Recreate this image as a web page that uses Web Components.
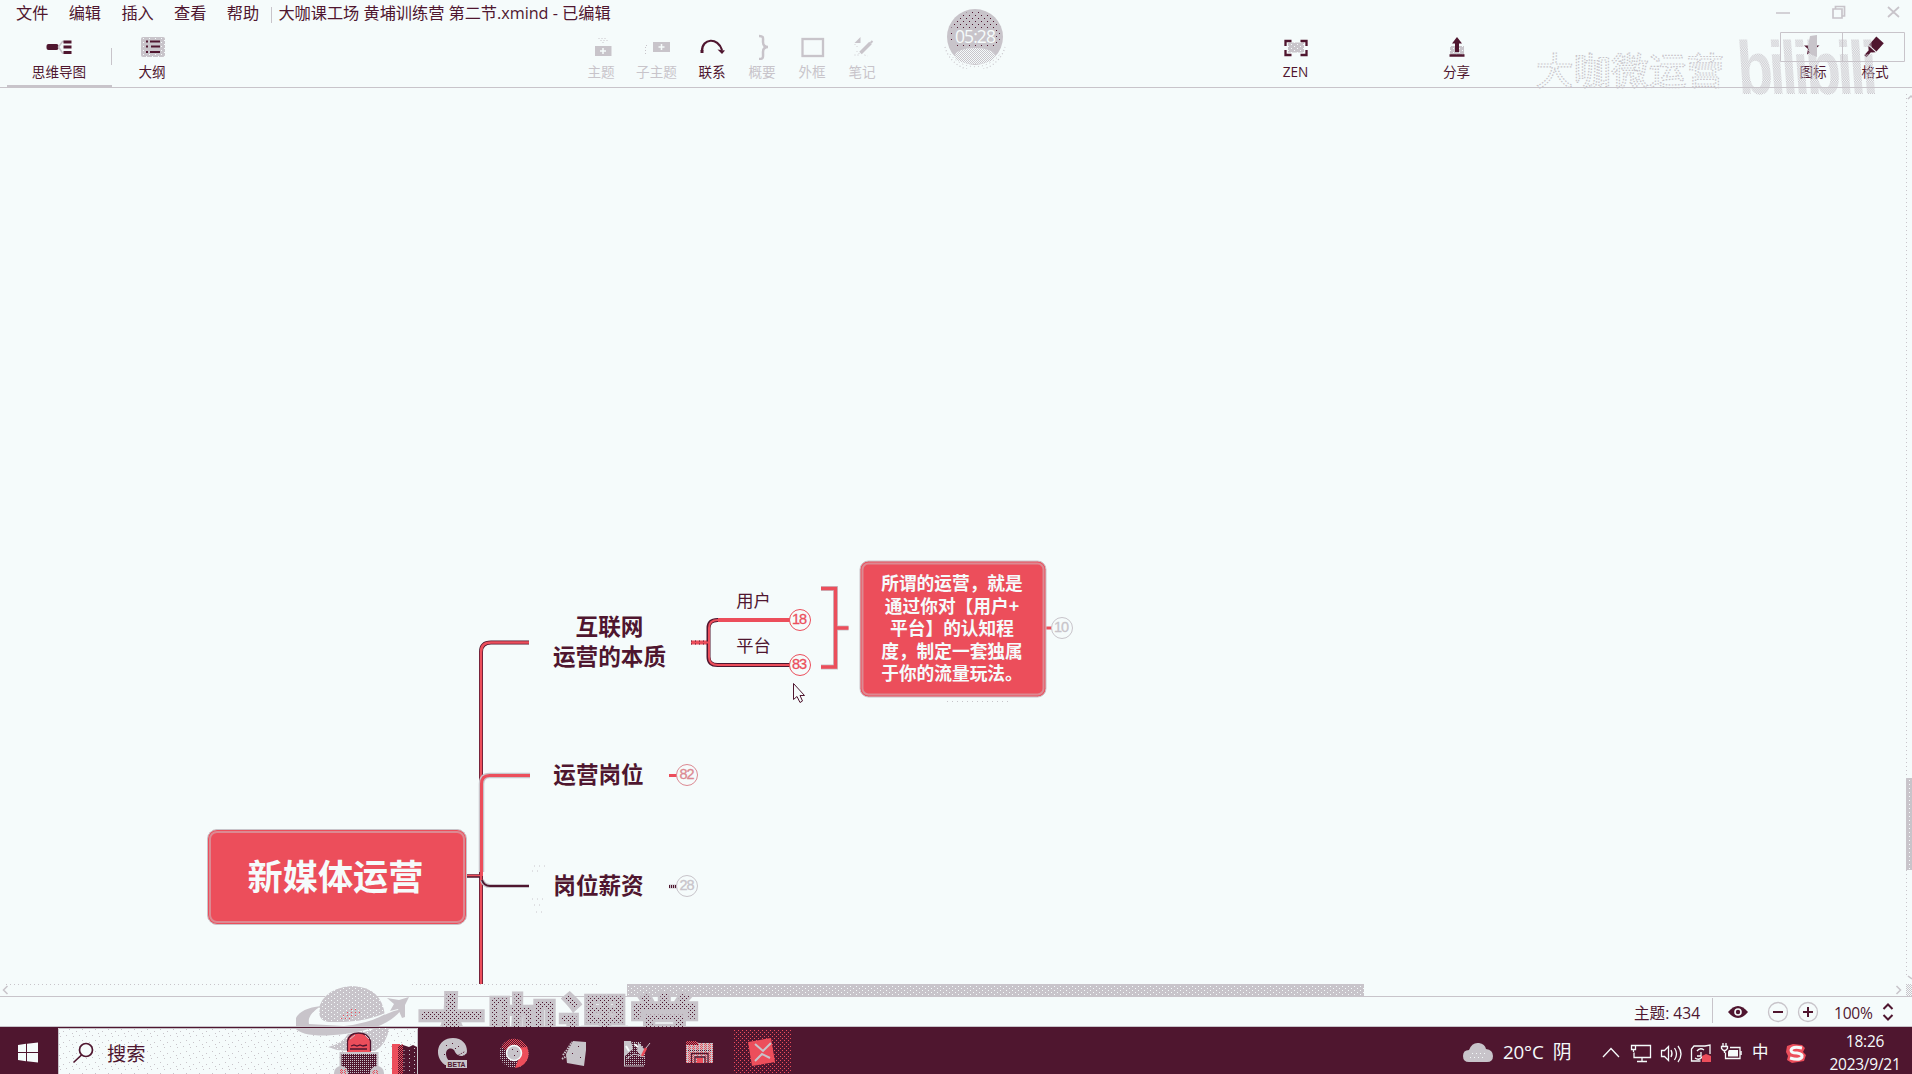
<!DOCTYPE html>
<html lang="zh-CN">
<head>
<meta charset="utf-8">
<title>XMind</title>
<style>
html,body{margin:0;height:100%;overflow:hidden}
body{--bg:#f5fbfb;--ink:#4f162f;--red:#ec4e5b;--gray:#c8c4ca;background:var(--bg);color:var(--ink);font-family:"Open Sans","Noto Sans CJK SC",sans-serif}
</style>
</head>
<body>
<mind-app></mind-app>
<script>
const DEFS = `<defs>
<pattern id="dk" width="4" height="4" patternUnits="userSpaceOnUse"><rect width="4" height="4" fill="#c8c4ca"/><rect width="1" height="1" fill="#4f162f"/><rect x="2" y="2" width="1" height="1" fill="#4f162f"/></pattern>
<pattern id="wh" width="6" height="4" patternUnits="userSpaceOnUse"><rect width="6" height="4" fill="#c8c4ca"/><rect x="1" width="1" height="1" fill="#f5fbfb"/><rect x="4" y="2" width="1" height="1" fill="#f5fbfb"/></pattern>
<pattern id="ck" width="2" height="2" patternUnits="userSpaceOnUse"><rect width="1" height="1" fill="#c8c4ca"/><rect x="1" y="1" width="1" height="1" fill="#c8c4ca"/></pattern>
<pattern id="rd" width="2" height="2" patternUnits="userSpaceOnUse"><rect width="2" height="2" fill="#4f162f"/><rect width="1" height="1" fill="#ec4e5b"/><rect x="1" y="1" width="1" height="1" fill="#ec4e5b"/></pattern>
<pattern id="rg" width="4" height="2" patternUnits="userSpaceOnUse"><rect width="4" height="2" fill="#c8c4ca"/><rect width="1" height="1" fill="#ec4e5b"/><rect x="2" width="1" height="1" fill="#ec4e5b"/><rect x="1" y="1" width="1" height="1" fill="#ec4e5b"/></pattern>
<pattern id="gk" width="2" height="2" patternUnits="userSpaceOnUse"><rect width="2" height="2" fill="#4f162f"/><rect width="1" height="1" fill="#c8c4ca"/></pattern>
</defs>`;
/* Icon art is written in window coordinates; the viewBox selects its cell. */
const art = (x,y,w,h,body) => `<svg width="${w}" height="${h}" viewBox="${x} ${y} ${w} ${h}" style="display:block;flex:none">${DEFS}${body}</svg>`;
const define = (name, css, html) => customElements.define(name, class extends HTMLElement{
  constructor(){ super(); this.attachShadow({mode:'open'}).innerHTML = `<style>${css}</style>` + html; }
});

define('tool-item', `:host{display:flex;flex-direction:column;align-items:center;padding-top:5px;box-sizing:border-box;height:59px;flex:none;width:var(--w,55px)}
:host([muted]){color:var(--gray)}
:host([active]){border-bottom:2px solid var(--gray)}
.l{font-size:13.6px;line-height:18px;margin-top:3px;white-space:nowrap;margin-left:-1px}
:host([shift]) .l{padding-left:5px}`, `<slot name="icon"></slot><div class="l"><slot></slot></div>`);

define('menu-bar', `:host{display:flex;height:28px;font-size:16.2px;line-height:26px;padding:0 0 0 16px;box-sizing:border-box;white-space:nowrap}
.m{width:52.7px;flex:none}.d{width:1px;height:16px;margin:7px 6px 0 -8px;background:var(--gray);flex:none}
.t{letter-spacing:-.02px}.w{margin-left:auto}`,
`<span class="m">文件</span><span class="m">编辑</span><span class="m">插入</span><span class="m">查看</span><span class="m">帮助</span><div class="d"></div><span class="t">大咖课工场 黄埔训练营 第二节.xmind - 已编辑</span>
<div class="w">${art(1770,0,142,28,`<g fill="none" stroke="#c8c4ca" stroke-width="1.7"><path d="M1776 13h14M1833 9h9v9h-9zM1835.500 9V6.500h9V16H1842M1888 7l11 10M1899 7l-11 10"/></g>`)}</div>`);

define('recording-timer', `:host{display:grid;place-items:center;width:64px;height:64px;position:relative}
svg{position:absolute;inset:0}span{position:relative;color:#f5fbfb;font:17.5px/20px "Open Sans",sans-serif;letter-spacing:-.9px;top:-1px}`,
`${art(943,5,64,64,`<circle cx="975" cy="37" r="28" fill="#c8c4ca"/><pattern id="d5" width="6" height="6" patternUnits="userSpaceOnUse"><rect width="1" height="1" fill="#4f162f"/><rect x="3" y="3" width="1" height="1" fill="#4f162f"/></pattern><path d="M951 43a25 25 0 1 1 48 0l-3 3h-42z" fill="url(#d5)"/><rect x="953" y="29" width="43" height="15" fill="#c8c4ca"/><ellipse cx="975" cy="56" rx="20" ry="8" fill="#f5fbfb"/><ellipse cx="975" cy="56" rx="20" ry="8" fill="url(#ck)"/><path d="M945 47a31 31 0 0 0 60 0" fill="none" stroke="#c8c4ca" stroke-width="1.200" stroke-dasharray="1 2.500"/><path d="M950 54a31 31 0 0 0 50 0" fill="none" stroke="#c8c4ca" stroke-dasharray="1 3"/>`)}<span>05:28</span>`);

const ti = (c,w,label,body,attr='') => `<tool-item style="--w:${w}px" ${attr}><div slot="icon">${art(c-16,33,32,27,body)}</div>${label}</tool-item>`;
define('tool-bar', `:host{display:flex;height:60px;border-bottom:1px solid var(--gray);box-sizing:border-box;padding-left:7px;position:relative}
.s{flex:none}.d{width:1px;height:17px;background:var(--gray);margin:20px 0 0 -1px;flex:none}
recording-timer{position:absolute;left:943px;top:-23px}.wm{position:absolute;left:1530px;top:-20px}`,
`${ti(59.5,105,'思维导图',`<rect x="46" y="44" width="12" height="6" rx="2" fill="#4f162f"/><path d="M64 41.500h-2l-4 5.500 4 6h2" fill="none" stroke="#c8c4ca" stroke-width="1.500"/><path d="M63 42h8M63 47h8M63 52.500h8" stroke="#4f162f" stroke-width="3"/>`,'active')}<div class="d"></div>
${ti(152,81,'大纲',`<rect x="140" y="37" width="24" height="20" rx="2" fill="url(#wh)"/><rect x="144" y="40" width="16" height="14" fill="#c8c4ca"/><path d="M145 41.500h2M149 41.500h10M145 46.500h2M150 46.500h9M145 52h2M149 52h10" stroke="#4f162f" stroke-width="2"/>`)}
<div class="s" style="width:381px"></div>
${ti(601.5,55,'主题',`<path d="M594.500 46h16.500v10H594.500z" fill="#c8c4ca"/><path d="M602.500 48v6M599.500 51h6" stroke="#f5fbfb" stroke-width="1.500"/><path d="M598 38.500h9M600 40.500h8M602 42.500h3" stroke="#c8c4ca" stroke-dasharray="1 2"/>`,'muted')}
${ti(657,56,'子主题',`<path d="M653 42h17v10H653z" fill="#c8c4ca"/><path d="M661.500 44v6M658.500 47h6" stroke="#f5fbfb" stroke-width="1.500"/><path d="M647 45.500h-1.500v10" fill="none" stroke="#c8c4ca" stroke-dasharray="1 2"/>`,'muted')}
${ti(712.5,55,'联系',`<path d="M701.500 51c0-13 16-14 20-1" fill="none" stroke="#4f162f" stroke-width="2.200"/><rect x="700" y="50" width="3" height="3" fill="#4f162f"/><path d="M717 49.500l7.500 1-3 3.500z" fill="#4f162f"/>`)}
${ti(762.5,45,'概要',`<path d="M758.500 36c5 0 4 2 4 6 0 3 1 5 5 5-4 0-5 2-5 5 0 5 1 7-4 7" fill="none" stroke="#c8c4ca" stroke-width="2.500"/>`,'muted')}
${ti(812.5,55,'外框',`<rect x="802" y="39" width="20.500" height="17" fill="none" stroke="#c8c4ca" stroke-width="2.300"/>`,'muted')}
${ti(862.5,45,'笔记',`<path d="M860 53l10-10" stroke="#c8c4ca" stroke-width="3.500"/><path d="M870 43l2-2" stroke="#c8c4ca" stroke-width="2"/><path d="M860 37v6h-6z" fill="#c8c4ca"/><path d="M854 44l4 4M854 55h4M856 51l3 3M864 55l3 1" stroke="#c8c4ca" stroke-dasharray="1 2"/>`,'muted')}
<div class="s" style="width:381px"></div>
${ti(1296,60,'ZEN',`<rect x="1288" y="42.500" width="16" height="10" fill="url(#wh)"/><path d="M1285.500 46v-5h6M1300.500 41h6v5M1285.500 50v5h6M1300.500 55h6v-5" fill="none" stroke="#4f162f" stroke-width="2.300"/>`)}
<div class="s" style="width:101px"></div>
${ti(1457,60,'分享',`<path d="M1450 46h14v9h-14z" fill="url(#wh)"/><path d="M1449.500 55.500h15" stroke="#4f162f" stroke-width="2.500"/><path d="M1457 52V41" stroke="#4f162f" stroke-width="4"/><path d="M1457 37l5 6.500h-10z" fill="#4f162f"/>`)}
<div class="s" style="width:293px"></div>
${ti(1811,62,'图标',`<path d="M1812 41l2 4.500h5.500l-4.500 3.500 2 5.500-5-3-5 3 1-5.500-4-3.500h6z" fill="#4f162f"/>`,'shift')}${ti(1873,62,'格式',`<g transform="rotate(42 1873 47)" fill="#4f162f"><path d="M1868.500 37h10v11h-10z"/><path d="M1868.500 49h10l-3 3h-4z"/><path d="M1872 51h3v8h-3z"/></g>`,'shift')}
<div class="wm">${art(1530,8,382,110,`<path d="M1780.500 32.500h124v29h-124zM1842.500 32.500v29" fill="none" stroke="#c8c4ca"/>
<text x="1536" y="85" font-size="37" textLength="188" lengthAdjust="spacingAndGlyphs" fill="none" stroke="#c8c4ca" stroke-width="1.200" stroke-dasharray="1.500 1.500" font-family="Noto Sans CJK SC,sans-serif">大咖微运营</text>
<text transform="translate(1739 94) skewX(4) scale(1 1.300)" x="0" y="0" font-size="58" font-weight="700" textLength="140" lengthAdjust="spacing" fill="url(#ck)" font-family="Liberation Sans,sans-serif">bilibili</text>
<path d="M1810 36l7-1v22l-7-3-2-7z" fill="#c8c4ca"/>`)}</div>
<recording-timer></recording-timer>`);

define('map-topic', `:host{position:absolute;left:var(--x);top:var(--y);transform:translate(-50%,-50%);text-align:center;white-space:nowrap;font:700 22.6px/30px "Noto Sans CJK SC",sans-serif}
:host([kind=leaf]){font-weight:400;font-size:17.3px;line-height:24px}
:host([kind=root]),:host([kind=note]){background:var(--red);color:var(--bg);box-sizing:border-box;display:grid;place-items:center;border:1.5px solid var(--gray);box-shadow:inset 0 0 0 1px var(--red),inset 0 0 0 3px #dc8992}
:host([kind=root]){width:260px;height:96px;border-radius:10px;font-size:35.2px}
:host([kind=root]) div{margin:-5px 0 0 -3px}
:host([kind=note]){width:187px;height:137px;border-radius:9px;font-size:17.7px;line-height:22.5px}
:host([kind=note]) div{margin:-3px 0 0 -2px}`, `<div><slot></slot></div>`);
define('fold-badge', `:host{position:absolute;left:var(--x);top:var(--y);width:22px;height:22px;border-radius:50%;box-sizing:border-box;border:1.8px solid var(--c,var(--red));color:var(--c,var(--red));background:var(--bg);transform:translate(-50%,-50%);font:14.5px/19px "Liberation Sans",sans-serif;text-align:center;letter-spacing:-1px;text-indent:-1px;-webkit-text-stroke:.3px}`, `<slot></slot>`);

define('map-canvas', `:host{display:block;position:relative;height:896px;overflow:hidden}
.lines{position:absolute;left:0;top:0}`,
`<div class="lines">${art(0,88,1912,896,`
<g fill="none"><path d="M481 984V652q0-9.500 10-9.500H529" stroke="#4f162f" stroke-width="4"/><path d="M481 984V652q0-9.500 10-9.500H529" stroke="#ec4e5b" stroke-width="2.500"/>
<path d="M481.500 872V784q0-8.500 8-8.500H530" stroke="#c8c4ca" stroke-width="5.500"/><path d="M481.500 876V784q0-8.500 8-8.500H530" stroke="#ec4e5b" stroke-width="3"/>
<path d="M482 880q2 6 8 6H529" stroke="#c8c4ca" stroke-width="4"/><path d="M482 880q2 6 8 6H529" stroke="#4f162f" stroke-width="2"/>
<path d="M467 876h13" stroke="#4f162f" stroke-width="3.500"/><path d="M467 875.500h13" stroke="#ec4e5b" stroke-width="1.500"/>
<path d="M691 642.500h17" stroke="#ec4e5b" stroke-width="4"/><path d="M691 642.500h17" stroke="#4f162f" stroke-width="4" stroke-dasharray="1 3"/><path d="M708.500 642V628q0-8 9-8H726M708.500 642V657q0 8 9 8H790" stroke="#4f162f" stroke-width="4"/>
<path d="M691 642.500h17M709 642V628q0-8 9-8M709 642V657q0 8 9 8H790" stroke="#ec4e5b" stroke-width="2"/><path d="M718 620H790" stroke="#ec4e5b" stroke-width="4"/>
<path d="M821 588.500h14.500V667H821M836 628h12.500" stroke="#c8c4ca" stroke-width="5"/><path d="M821 588.500h14.500V667H821M836 628h12.500" stroke="#ec4e5b" stroke-width="3.400"/>
<path d="M669 775.500h9M1046 628h6" stroke="#ec4e5b" stroke-width="3"/><path d="M669 886.500h9" stroke="#c8c4ca" stroke-width="4"/><path d="M669 886.500h9" stroke="#4f162f" stroke-width="3" stroke-dasharray="1 1"/></g>
<path d="M793.500 683.500v16l3.500-3 3 6 2.500-1.500-2.500-5.500h4.500z" fill="#f5fbfb" stroke="#4f162f"/>
<path d="M534 866h12M532 871h10M532 899h12M534 905h10M536 912h8" stroke="#c8c4ca" stroke-dasharray="1 4"/>
<path d="M947 701.500h64" stroke="#c8c4ca" stroke-dasharray="1 4"/>`)}</div>
<map-topic kind="root" style="--x:337px;--y:789px">新媒体运营</map-topic>
<map-topic style="--x:609.5px;--y:552.5px">互联网<br>运营的本质</map-topic>
<map-topic style="--x:598.5px;--y:685.5px">运营岗位</map-topic>
<map-topic style="--x:598.5px;--y:796.5px">岗位薪资</map-topic>
<map-topic kind="leaf" style="--x:753.5px;--y:512.3px">用户</map-topic>
<map-topic kind="leaf" style="--x:753.5px;--y:557.3px">平台</map-topic>
<map-topic kind="note" style="--x:953px;--y:540.5px">所谓的运营，就是<br>通过你对【用户+<br>平台】的认知程<br>度，制定一套独属<br>于你的流量玩法。</map-topic>
<fold-badge style="--x:799.5px;--y:532px">18</fold-badge><fold-badge style="--x:799.5px;--y:577px">83</fold-badge>
<fold-badge style="--x:1061.5px;--y:540px;--c:var(--gray)">10</fold-badge><fold-badge style="--x:687px;--y:687px;--c:#dc8992">82</fold-badge><fold-badge style="--x:687px;--y:798px;--c:var(--gray)">28</fold-badge>`);

define('scroll-bars', `:host{display:flex;height:13px;border-bottom:1px solid var(--gray);box-sizing:border-box}`,
art(0,984,1912,12,`<path d="M6 984.500H300M412 984.500H600" stroke="#c8c4ca" stroke-dasharray="1 3"/><rect x="627" y="984" width="737" height="12" fill="url(#wh)"/><path d="M627 984.500h737" stroke="#c8c4ca"/><path d="M7.500 986l-4 4 4 4M1896.500 986l4 4-4 4" fill="none" stroke="#c8c4ca" stroke-width="1.500"/><rect x="1906" y="984" width="6" height="12" fill="url(#ck)"/>`));
define('side-scroll', `:host{display:block;position:absolute;right:0;top:88px}`,
art(1904,88,8,896,`<path d="M1906.500 94V978" stroke="#c8c4ca" stroke-dasharray="1 3"/><rect x="1906" y="778" width="6" height="92" fill="url(#wh)"/><path d="M1906.500 778v92" stroke="#c8c4ca"/><path d="M1908 99l3-3 3 3M1908 976l4 3" fill="none" stroke="#c8c4ca" stroke-width="1.500"/>`));

define('status-bar', `:host{display:flex;height:30px;box-sizing:border-box;justify-content:flex-end;font-size:15.6px;line-height:33px;border-bottom:1px solid var(--gray)}
.c{width:68px;white-space:nowrap;letter-spacing:0;margin-left:-1px}.d{width:1px;height:25px;margin:1px 9px 0 10px;background:var(--gray)}.z{width:40px;letter-spacing:-.25px;white-space:nowrap}`,
`<div class="c">主题: 434</div><div class="d"></div>
${art(1722,997,112,29,`<path d="M1728 1012q10-12 20 0q-10 12-20 0z" fill="#4f162f"/><circle cx="1738" cy="1012" r="3.800" fill="#f5fbfb"/><circle cx="1738" cy="1012" r="2.200" fill="#4f162f"/><circle cx="1778" cy="1012" r="9.500" fill="none" stroke="#c8c4ca" stroke-width="1.300"/><circle cx="1808" cy="1012" r="9.500" fill="none" stroke="#c8c4ca" stroke-width="1.300"/><path d="M1773 1012h10M1803 1012h10M1808 1007v10" stroke="#4f162f" stroke-width="2"/>`)}
<div class="z">100%</div>${art(1874,997,38,29,`<path d="M1883.500 1009l4.500-4.500 4.500 4.500M1883.500 1015l4.500 4.500 4.500-4.500" fill="none" stroke="#4f162f" stroke-width="2"/>`)}`);

define('search-box', `:host{display:flex;width:360px;height:47px;box-sizing:border-box;background:var(--bg);border-top:1px solid var(--ink);color:var(--ink);font-size:19.2px;line-height:49px;flex:none;position:relative}
span{position:absolute;left:49px;top:1px}`,
`${art(58,1028,360,46,`<pattern id="sp" width="13" height="11" patternUnits="userSpaceOnUse"><path d="M1 1.500h1M8 2.500h1M4 6.500h1M11 8.500h1M7 10.500h1" stroke="#c8c4ca"/></pattern><rect x="58" y="1028" width="360" height="46" fill="url(#sp)"/><path d="M58.500 1074v-45.500h359V1074" fill="none" stroke="#c8c4ca"/>
<circle cx="86" cy="1050" r="6.500" fill="#f5fbfb" stroke="#4f162f" stroke-width="1.700"/><path d="M81.500 1055l-8 7.500" stroke="#4f162f" stroke-width="1.700"/>
<path d="M348 1034q18-1 28-6h13q-2 16-14 23h-27l-11-1-9-3q14-3 20-13z" fill="url(#wh)"/>
<path d="M295 1028q6 8 32 7.500q28-1.500 45-7.500z" fill="#c8c4ca"/>
<path d="M340 1053h37v21h-37z" fill="url(#gk)"/><path d="M340.500 1074v-21h37v21" fill="none" stroke="#c8c4ca" stroke-width="2"/><path d="M347 1052v-11q1-8 11-8t12 8l1 11z" fill="#ec4e5b"/><path d="M347.500 1051v-10q2-8 11-8t12 8v10M350 1049h17M351 1046l3-1 3 1 3-1 3 1 4-1" fill="none" stroke="#4f162f" stroke-width="1.300"/><path d="M350 1039l5-4M365 1035l4 4" stroke="#c8c4ca"/>
<circle cx="341" cy="1073" r="7" fill="#c8c4ca"/><circle cx="377" cy="1073" r="7" fill="#c8c4ca"/><path d="M340 1069h6v5h-7zM373 1070h5v4h-6z" fill="url(#rg)"/>
<path d="M392 1044h8v30h-8z" fill="#ec4e5b"/><path d="M398 1046l5-2v30h-5z" fill="url(#rd)"/><path d="M403 1045l6 2 4-2 4 2v27h-14z" fill="#4f162f"/><path d="M404 1050v24M409.500 1050v24M414.500 1048v26" stroke="#c8c4ca" stroke-dasharray="1 3"/>`)}<span>搜索</span>`);

define('task-bar', `:host{display:flex;height:47px;background:var(--ink);color:var(--bg);white-space:nowrap}
.g{width:3px}.r{display:flex;margin-left:auto}.w{width:97px;font-size:18.8px;line-height:50px;word-spacing:4.500px;letter-spacing:-.2px}
.k{display:grid;gap:5px;align-content:start;font-size:15.5px;line-height:18px;text-align:center;width:94px;letter-spacing:-.25px;padding-top:5px;box-sizing:border-box}.i{width:20px;font-size:16.5px;line-height:50px}`,
`${art(0,1027,58,47,`<path d="M18 1045l8-1.200v8.200h-8zM27 1043.700l11-1.200v9.500h-11zM18 1053h8v8.200l-8-1.200zM27 1053h11v9.500l-11-1.200z" fill="#f5fbfb"/>`)}<search-box></search-box><div class="g"></div>
${art(421,1027,62,47,`<path d="M445 1065c-12-9-8-27 8-27 9 0 14 6 14 13 0 6-9 7-12 1-1-5-9-5-9 2 0 5 5 10 11 11z" fill="#c8c4ca"/><path d="M446 1045.500h1M452 1043.500h1M458 1046.500h1M449 1049.500h1M455 1048.500h1M444 1054.500h1" stroke="#4f162f"/><path d="M456 1056.500l9-5M458 1058.500l8-4" stroke="#4f162f" stroke-dasharray="1 1"/><rect x="446" y="1060" width="21" height="8" fill="#c8c4ca"/><text x="447.500" y="1067" font-size="7.500" font-weight="700" textLength="18" lengthAdjust="spacingAndGlyphs" fill="#4f162f" font-family="Liberation Sans,sans-serif">BETA</text>`)}
${art(483,1027,62,47,`<circle cx="514" cy="1053.500" r="14.500" fill="url(#gk)"/><path d="M501 1047a14.500 14.500 0 0 1 27 2l-7 2-14 0z" fill="url(#rd)"/><path d="M527 1047a14.500 14.500 0 0 1-12 21l6-15-6-5z" fill="#ec4e5b"/><circle cx="514" cy="1053" r="7.500" fill="#c8c4ca" stroke="#f5fbfb" stroke-width="1.500"/><path d="M512 1049.500h1M517 1051.500h1M514 1055.500h1" stroke="#4f162f"/>`)}
${art(545,1027,62,47,`<path d="M573 1041l13 1v8l-2 16-17-3-1-9z" fill="#c8c4ca"/><path d="M562 1059l5-3M563 1055l4-5 5-8" fill="none" stroke="#c8c4ca" stroke-width="2" stroke-dasharray="1.500 1"/><path d="M572 1053.500h1M578 1046.500h1M580 1057.500h1" stroke="#4f162f"/>`)}
${art(607,1027,62,47,`<path d="M624 1041h16l5 9v16h-21z" fill="url(#gk)"/><path d="M625 1041h6l2 8-8 7zM638 1042l7 8-3 7-5-6z" fill="#c8c4ca"/><path d="M626 1059l8-5 11 3M624.500 1066v-25M624 1066h20" fill="none" stroke="#c8c4ca"/><path d="M626 1046l3 5M634 1044l4 3" stroke="#f5fbfb" stroke-width="2"/><path d="M642 1056l4-8" stroke="#ec4e5b" stroke-width="2.500"/><path d="M646 1048l4-5" stroke="#c8c4ca"/>`)}
${art(669,1027,62,47,`<path d="M686 1042h10l3 1h14v20h-27z" fill="url(#rg)"/><path d="M686 1041h10l3 4h-13z" fill="url(#rd)"/><path d="M691.500 1064v-10.500h16.500v10.500M695 1063v-6h10v6" fill="none" stroke="#4f162f" stroke-width="1.300"/><path d="M697 1063v-5h6v5" fill="#ec4e5b"/><path d="M688 1050.500h23" stroke="#4f162f" stroke-dasharray="1 1"/>`)}
${art(731,1027,62,47,`<pattern id="rp" width="4" height="4" patternUnits="userSpaceOnUse"><path d="M0 .5h1M2 2.500h1" stroke="#ec4e5b"/></pattern><path d="M733 1030h59v44h-59z" fill="url(#rp)"/><path d="M748 1042l23-4 4 24-23 4z" fill="#ec4e5b"/><path d="M755 1044l8 7 8-8M755 1061l7-7 8 4" fill="none" stroke="#c8c4ca" stroke-width="2"/>`)}
<div class="r">${art(1459,1027,44,47,`<path d="M1469 1062q-6 0-6-6t6-6q3-8 10-7 6 1 7 6 7 1 7 7 0 6-6 6z" fill="#c8c4ca"/><path d="M1472 1053.500h14M1470 1057.500h16" stroke="#f5fbfb" stroke-dasharray="1 3"/>`)}<div class="w">20°C 阴</div>
${art(1600,1027,152,47,`<g fill="none" stroke="#f5fbfb" stroke-width="1.300"><path d="M1603 1057l8-8.500 8 8.500M1636 1045.500h14.500v12H1634v-5M1642 1058v3M1637 1061.500h10M1631.500 1045.500h4v4h-4zM1633.500 1049v3M1661.500 1050.500h3l4-4v14l-4-4h-3zM1671 1050q2 3.500 0 7M1674.500 1048q4 6 0 12M1678 1046q6 8 0 16M1706 1046h-12l-2.500 3v12h9M1705 1046l5-1v9M1697 1056h4v-4M1697 1051q3-4 7-1M1695 1058q4 3 7-1"/><path d="M1730 1047.500h10v11h-14.500v-6M1723 1043v3M1726 1043v3M1721.500 1046.500h6v2l-2 2h-2l-2-2zM1724.500 1050v3"/></g><path d="M1729 1050h9v6.500h-10v-5z" fill="#f5fbfb"/><path d="M1702 1056l4-2 5 2v6h-9z" fill="#ec4e5b"/><path d="M1741 1051v4" stroke="#f5fbfb" stroke-width="1.500"/>`)}<div class="i">中</div>
${art(1772,1027,46,47,`<path d="M1787 1046l6-2 9 1 3 3-2 4 3 3-2 6-12 2-5-3 1-4-2-4z" fill="#ec4e5b"/><path d="M1802 1048q-10-2-11 2 0 3 6 3 6 1 5 4-2 4-12 1" fill="none" stroke="#f5fbfb" stroke-width="3"/>`)}<div class="k"><span>18:26</span><span>2023/9/21</span></div></div>`);

define('brand-watermark', `:host{display:block;position:absolute;left:290px;top:984px;pointer-events:none}`,
art(290,984,420,43,`<path d="M318 1021q-2-32 34-35 30 1 33 30-30 9-67 5z" fill="url(#wh)"/><path d="M343 1015.500h16M341 1018.500h12M347 1012.500h14M351 1009.500h6" stroke="#ec4e5b" stroke-dasharray="1 3"/>
<path d="M321 1006q-20 2-25 12v9h80q17-6 26-18l-8 2q-36 16-72 12-20-5-1-17z" fill="#c8c4ca"/><path d="M309 1024q-2-10 11-16-3 12 8 14 40 2 67-14-20 15-51 18z" fill="#f5fbfb"/>
<path d="M387 998l12 2 10-3-4 8v12l-3 1-4-9-8 2 4-7z" fill="#c8c4ca"/>
<text x="416" y="1052" font-size="69" font-weight="900" textLength="284" lengthAdjust="spacingAndGlyphs" fill="url(#dk)" stroke="#c8c4ca" stroke-width="2.500" font-family="Noto Sans CJK SC,sans-serif">大咖课堂</text>`));

define('mind-app', `:host{display:flex;flex-direction:column;width:1912px;height:1074px;position:relative;overflow:hidden}`,
`<menu-bar></menu-bar><tool-bar></tool-bar><map-canvas></map-canvas><scroll-bars></scroll-bars><status-bar></status-bar><task-bar></task-bar><side-scroll></side-scroll><brand-watermark></brand-watermark>`);
</script>
</body>
</html>
